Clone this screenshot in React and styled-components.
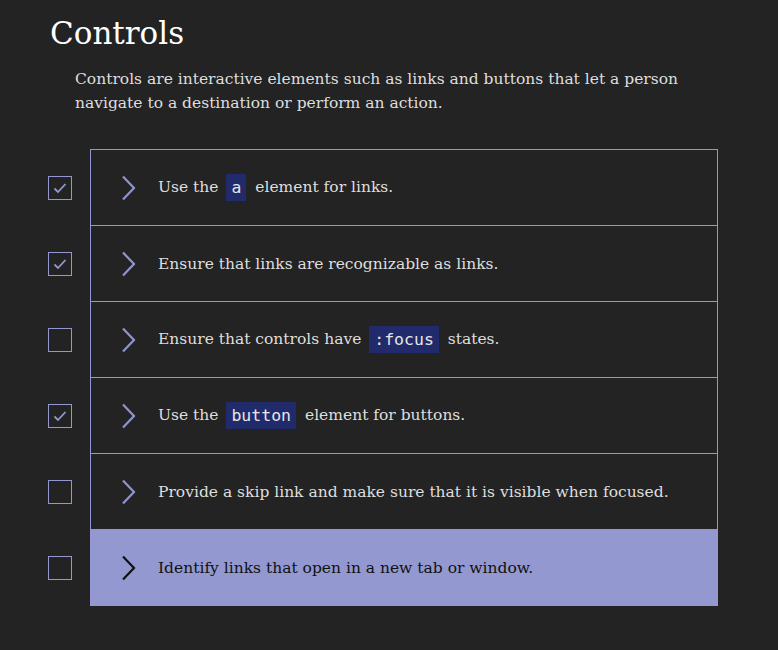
import React from "react";
import styled, { createGlobalStyle } from "styled-components";

const GlobalStyle = createGlobalStyle`
	body {
		margin: 0;
		background: #232323;
		font-family: "DejaVu Serif", "Liberation Serif", serif;
	}
`;

const Page = styled.main`
	padding: 12px 0 40px 50px;
	color: #dedede;
`;

const Title = styled.h1`
	margin: 0;
	font-size: 31px;
	font-weight: 400;
	line-height: 42px;
	color: #ffffff;
`;

const Desc = styled.p`
	margin: 13px 0 0 25px;
	width: 620px;
	font-size: 15.5px;
	line-height: 24px;
`;

const List = styled.ul`
	list-style: none;
	margin: 34px 0 0 -2px;
	padding: 0;
`;

const Row = styled.li`
	display: flex;
	align-items: center;
	gap: 18px;
`;

const Check = styled.span`
	width: 24px;
	height: 24px;
	box-sizing: border-box;
	border: 1px solid #9298cf;
	display: flex;
	align-items: center;
	justify-content: center;
	flex-shrink: 0;
`;

const Item = styled.div`
	width: 628px;
	box-sizing: border-box;
	display: flex;
	align-items: center;
	padding-left: 29px;
	border: 1px solid ${(p) => (p.$active ? "#9399d0" : "#9298cf")};
	border-top-width: ${(p) => (p.$first ? "1px" : "0")};
	height: ${(p) => (p.$first ? "77px" : "76px")};
	background: ${(p) => (p.$active ? "#9399d0" : "transparent")};
	color: ${(p) => (p.$active ? "#111111" : "#dedede")};
`;

const Chevron = styled.svg`
	width: 16px;
	height: 26px;
	margin-right: 22px;
	flex-shrink: 0;
`;

const Text = styled.span`
	font-size: 15.5px;
	line-height: 24px;
`;

const Code = styled.code`
	display: inline-block;
	font-family: "DejaVu Sans Mono", "Liberation Mono", monospace;
	font-size: 16.5px;
	line-height: 27px;
	padding: 0 5px;
	margin: 0 4px 0 3px;
	background: #212a6a;
	color: #e6e6e6;
	vertical-align: middle;
`;

const items = [
	{ done: true, text: ["Use the ", "a", " element for links."] },
	{ done: true, text: ["Ensure that links are recognizable as links."] },
	{ done: false, text: ["Ensure that controls have ", ":focus", " states."] },
	{ done: true, text: ["Use the ", "button", " element for buttons."] },
	{ done: false, text: ["Provide a skip link and make sure that it is visible when focused."] },
	{ done: false, text: ["Identify links that open in a new tab or window."], active: true },
];

const App = () => {
	return (
		<Page>
			<GlobalStyle />
			<Title>Controls</Title>
			<Desc>
				Controls are interactive elements such as links and buttons that let a
				person navigate to a destination or perform an action.
			</Desc>
			<List>
				{items.map((it, i) => (
					<Row key={i}>
						<Check>
							{it.done && (
								<svg width="16" height="16" viewBox="0 0 16 16">
									<path d="M2.5 8.5 L6 12 L13.5 4" fill="none" stroke="#9298cf" strokeWidth="1.8" />
								</svg>
							)}
						</Check>
						<Item $first={i === 0} $active={it.active}>
							<Chevron viewBox="0 0 16 26">
								<path
									d="M3 1.5 L14 13 L3 24.5"
									fill="none"
									stroke={it.active ? "#111" : "#8f95cf"}
									strokeWidth="2.2"
								/>
							</Chevron>
							<Text>
								{it.text.map((t, j) => (j === 1 ? <Code key={j}>{t}</Code> : t))}
							</Text>
						</Item>
					</Row>
				))}
			</List>
		</Page>
	);
};

export default App;
